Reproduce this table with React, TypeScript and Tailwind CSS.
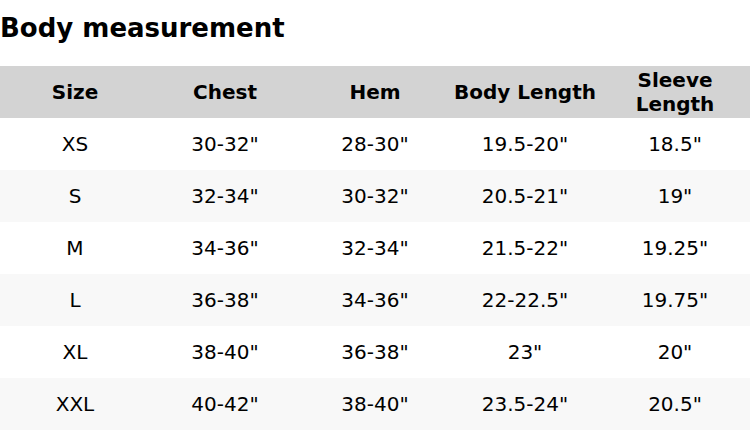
const headers = ["Size", "Chest", "Hem", "Body Length", "Sleeve Length"];

const rows = [
  ["XS", '30-32"', '28-30"', '19.5-20"', '18.5"'],
  ["S", '32-34"', '30-32"', '20.5-21"', '19"'],
  ["M", '34-36"', '32-34"', '21.5-22"', '19.25"'],
  ["L", '36-38"', '34-36"', '22-22.5"', '19.75"'],
  ["XL", '38-40"', '36-38"', '23"', '20"'],
  ["XXL", '40-42"', '38-40"', '23.5-24"', '20.5"'],
];

export default function App() {
  return (
    <div className="w-[750px] h-[430px] bg-white text-black font-['DejaVu_Sans',sans-serif] overflow-hidden">
      <div className="h-[66px] pt-[13px]">
        <h2 className="text-[26px] leading-[30px] font-bold">Body measurement</h2>
      </div>

      <div className="grid grid-cols-5 h-[52px] bg-[#d3d3d3] items-center">
        {headers.map((h) => (
          <div key={h} className="text-center text-[20px] leading-[24px] font-bold">
            {h === "Sleeve Length" ? (
              <>
                Sleeve
                <br />
                Length
              </>
            ) : (
              h
            )}
          </div>
        ))}
      </div>

      {rows.map((r, i) => (
        <div
          key={r[0]}
          className={`grid grid-cols-5 h-[52px] items-center ${i % 2 === 1 ? "bg-[#f8f8f8]" : "bg-white"}`}
        >
          {r.map((c, j) => (
            <div key={j} className="text-center text-[20px] leading-[24px]">
              {c}
            </div>
          ))}
        </div>
      ))}
    </div>
  );
}
